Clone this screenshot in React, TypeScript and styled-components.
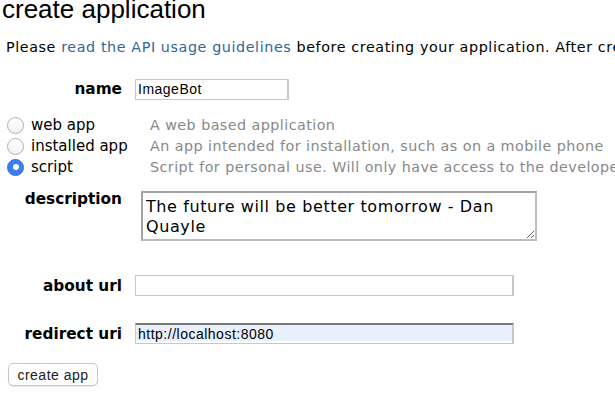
import React from "react";
import styled, { createGlobalStyle } from "styled-components";

const Global = createGlobalStyle`
  html, body { margin: 0; padding: 0; background: #fff; }
  body { font-family: "DejaVu Sans", Verdana, sans-serif; color: #000; overflow: hidden; }
`;

const Page = styled.div`
  width: 615px;
  height: 418px;
  overflow: hidden;
  display: flex;
  flex-direction: column;
`;

const Title = styled.h1`
  margin: -4px 0 0 2px;
  font-family: "Liberation Sans", Arial, sans-serif;
  font-weight: normal;
  font-size: 26px;
  line-height: 26px;
  white-space: nowrap;
`;

const Intro = styled.p`
  margin: 17px 0 0 6px;
  font-size: 14.3px;
  line-height: 16px;
  letter-spacing: 0.6px;
  white-space: nowrap;
`;

const Link = styled.a`
  color: #336699;
  text-decoration: none;
`;

const Row = styled.div<{ $top: number; $align?: string }>`
  display: flex;
  align-items: ${(p) => p.$align || "center"};
  margin-top: ${(p) => p.$top}px;
`;

const Label = styled.label`
  width: 122px;
  flex: none;
  text-align: right;
  font-weight: bold;
  font-size: 15.3px;
  line-height: 16px;
`;

const TextInput = styled.input<{ $w: number; $filled?: boolean }>`
  box-sizing: border-box;
  margin-left: 13px;
  width: ${(p) => p.$w}px;
  height: 21px;
  padding: 0 2px;
  font-family: "Liberation Sans", Arial, sans-serif;
  font-size: 14px;
  letter-spacing: 0.5px;
  color: #000;
  outline: none;
  border: 1px solid #c8c8c8;
  border-right-width: 2px;
  background: ${(p) => (p.$filled ? "#e8f0fe" : "#fff")};
  border-top: ${(p) => (p.$filled ? "2px solid #787878" : "1px solid #c8c8c8")};
  box-shadow: ${(p) => (p.$filled ? "inset 0 -2px 0 #fff" : "none")};
`;

const TextArea = styled.textarea`
  box-sizing: border-box;
  margin-left: 19px;
  width: 396px;
  height: 50px;
  padding: 4px 3px 2px;
  font-family: "DejaVu Sans", Verdana, sans-serif;
  font-size: 16px;
  letter-spacing: 0.6px;
  line-height: 20px;
  color: #000;
  border: 2px solid #a3a3a3;
  border-right-color: #bdbdbd;
  border-bottom-color: #bdbdbd;
  outline: none;
  overflow: hidden;
  resize: both;
`;

const RadioGroup = styled.div`
  margin-top: 15px;
  display: grid;
  grid-template-columns: 150px auto;
  grid-auto-rows: 21px;
  align-items: center;
`;

const RadioLabel = styled.label`
  display: flex;
  align-items: center;
  padding-left: 7px;
  font-size: 15px;
  line-height: 16px;
  white-space: nowrap;
`;

const RadioDot = styled.span<{ $on?: boolean }>`
  box-sizing: border-box;
  width: 17px;
  height: 17px;
  border-radius: 50%;
  flex: none;
  margin-right: 7px;
  display: flex;
  align-items: center;
  justify-content: center;
  border: 1px solid ${(p) => (p.$on ? "#2f73ec" : "#b0b0b0")};
  background: ${(p) => (p.$on ? "#3a7ff5" : "linear-gradient(#fff, #f2f2f2)")};
  &::after {
    content: "";
    display: ${(p) => (p.$on ? "block" : "none")};
    width: 6px;
    height: 6px;
    border-radius: 50%;
    background: #fff;
  }
`;

const RadioDesc = styled.span`
  color: #888;
  font-size: 14.3px;
  line-height: 16px;
  letter-spacing: 0.45px;
  white-space: nowrap;
`;

const Button = styled.button`
  margin: 19px 0 0 8px;
  align-self: flex-start;
  width: 90px;
  height: 23px;
  padding: 0;
  font-family: "Liberation Sans", Arial, sans-serif;
  font-size: 14px;
  letter-spacing: 0.5px;
  color: #222;
  background: #fff;
  border: 1px solid #c6c6c6;
  border-radius: 5px;
  box-shadow: 0 1px 1px rgba(0, 0, 0, 0.08);
`;

const kinds = [
  { name: "web app", desc: "A web based application", on: false },
  { name: "installed app", desc: "An app intended for installation, such as on a mobile phone", on: false },
  { name: "script", desc: "Script for personal use. Will only have access to the developer's accounts", on: true },
];

export default function App() {
  return (
    <Page>
      <Global />
      <Title>create application</Title>
      <Intro>
        Please <Link href="#">read the API usage guidelines</Link> before creating your application. After creating, you will be required to register for production API use.
      </Intro>
      <Row $top={23.5}>
        <Label>name</Label>
        <TextInput $w={154} defaultValue="ImageBot" />
      </Row>
      <RadioGroup>
        {kinds.map((k) => (
          <React.Fragment key={k.name}>
            <RadioLabel>
              <RadioDot $on={k.on} />
              {k.name}
            </RadioLabel>
            <RadioDesc>{k.desc}</RadioDesc>
          </React.Fragment>
        ))}
      </RadioGroup>
      <Row $top={13.5} $align="flex-start">
        <Label>description</Label>
        <TextArea defaultValue="The future will be better tomorrow - Dan Quayle" />
      </Row>
      <Row $top={34}>
        <Label>about url</Label>
        <TextInput $w={379} />
      </Row>
      <Row $top={27}>
        <Label>redirect uri</Label>
        <TextInput $w={379} $filled defaultValue="http://localhost:8080" />
      </Row>
      <Button>create app</Button>
    </Page>
  );
}
